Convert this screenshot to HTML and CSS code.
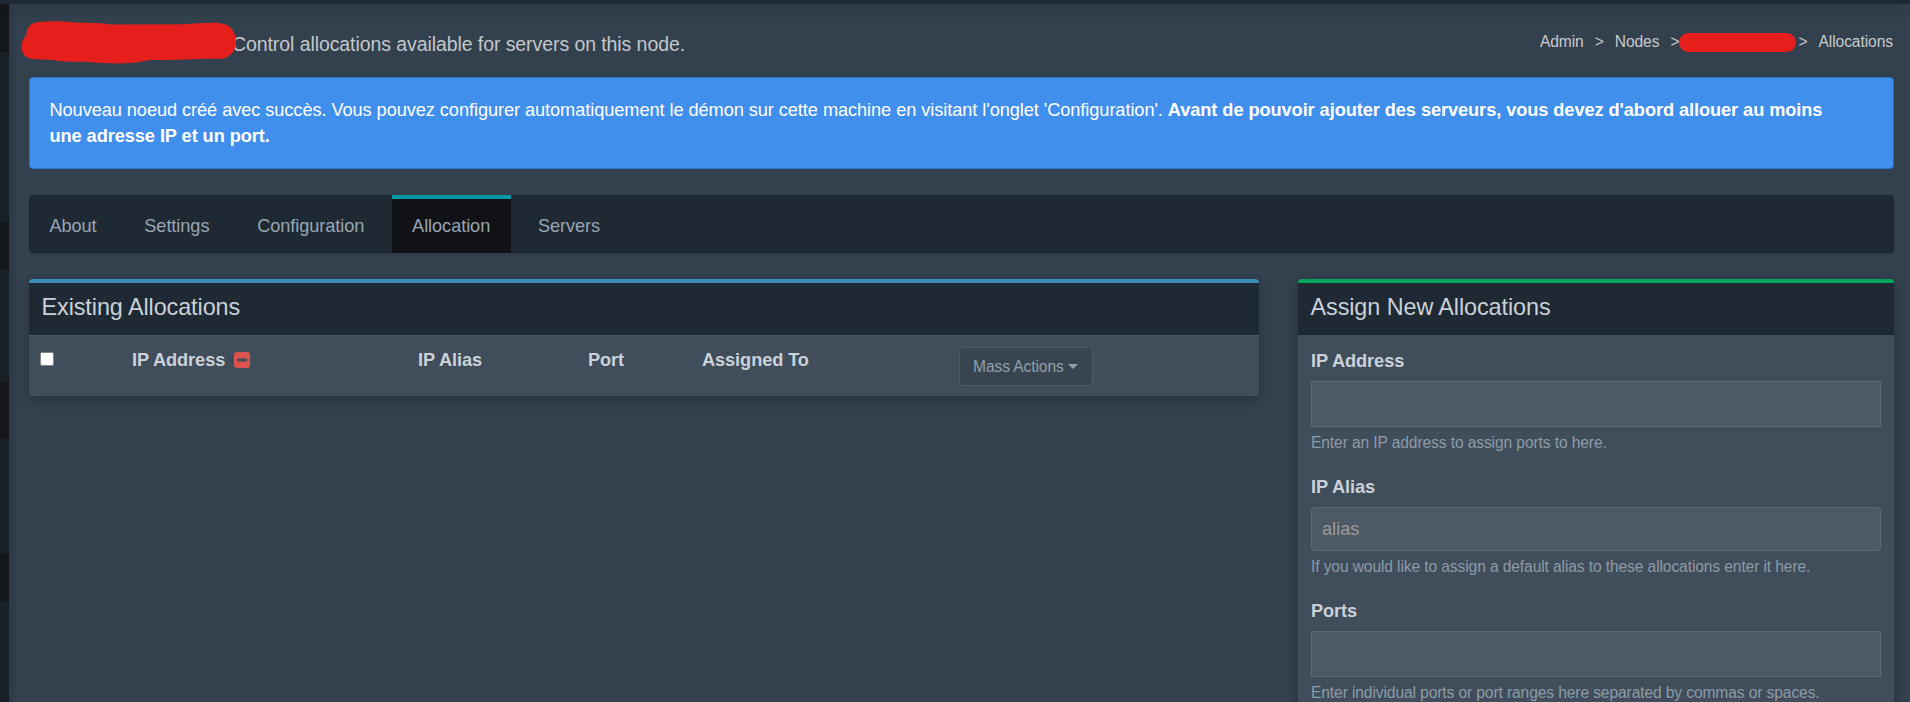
FILE: index.html
```html
<!DOCTYPE html>
<html lang="fr">
<head>
<meta charset="utf-8">
<title>Allocations</title>
<link rel="stylesheet" href="styles.css">
</head>
<body>
<div class="navbar"></div>
<div class="wrapper">
  <aside class="sidebar">
    <div class="side-dark side-first"></div>
    <div class="side-dark side-second"></div>
    <div class="side-dark side-active"></div>
    <div class="side-dark side-last"></div>
  </aside>
  <main class="content">
    <header class="page-header">
      <div class="title">
        <svg class="title-mask" width="216" height="44" viewBox="0 0 216 44"><path d="M18 1C9 2 5 7 5.500 14.500C2 17 .5 21 .5 26C.5 33 5 37 11 38L32 39C43 41 53 41 64 40.700C80 42 97 43 110 42C120 41 124 39.500 132 38.800C151 39.500 166 38.500 181 37.800L201 37.800C210 36 215 29 215 21C215 10 209 3 198 2C184 1.400 174 2.500 164 3.200L90 3.500C77 1.600 66 2 54 1.600C42 .2 29 -.2 18 1Z"/></svg>
        <h1>Control allocations available for servers on this node.</h1>
      </div>
      <nav class="breadcrumb">
        <a class="crumb-admin">Admin</a><span class="sep">&gt;</span><a>Nodes</a><span class="sep sep-mask">&gt;</span><i class="crumb-mask"></i><span class="sep sep-end">&gt;</span><span>Allocations</span>
      </nav>
    </header>
    <div class="alert">Nouveau noeud créé avec succès. Vous pouvez configurer automatiquement le démon sur cette machine en visitant l'onglet 'Configuration'. <strong>Avant de pouvoir ajouter des serveurs, vous devez d'abord allouer au moins<br>une adresse IP et un port.</strong></div>
    <nav class="tabs">
      <a class="tab">About</a>
      <a class="tab">Settings</a>
      <a class="tab">Configuration</a>
      <a class="tab active">Allocation</a>
      <a class="tab">Servers</a>
    </nav>
    <div class="row">
      <section class="box box-primary">
        <h3 class="box-title">Existing Allocations</h3>
        <div class="table-head">
          <div><span class="checkbox"></span></div>
          <div class="ip-head">IP Address
            <svg class="minus" width="16" height="16" viewBox="0 0 16 16"><path fill-rule="evenodd" d="M3 0H13Q16 0 16 3V13Q16 16 13 16H3Q0 16 0 13V3Q0 0 3 0ZM3.800 6.600Q3 6.600 3 7.400V8.600Q3 9.400 3.800 9.400H12.200Q13 9.400 13 8.600V7.400Q13 6.600 12.200 6.600Z"/></svg>
          </div>
          <div>IP Alias</div>
          <div>Port</div>
          <div>Assigned To</div>
          <div><button class="mass">Mass Actions <span class="caret"></span></button></div>
        </div>
      </section>
      <section class="box box-success">
        <h3 class="box-title">Assign New Allocations</h3>
        <div class="form">
          <label>IP Address</label>
          <div class="field select"></div>
          <p>Enter an IP address to assign ports to here.</p>
          <label>IP Alias</label>
          <input class="field" type="text" placeholder="alias">
          <p>If you would like to assign a default alias to these allocations enter it here.</p>
          <label>Ports</label>
          <div class="field select"></div>
          <p>Enter individual ports or port ranges here separated by commas or spaces.</p>
        </div>
      </section>
    </div>
  </main>
</div>
</body>
</html>
```
FILE: styles.css
```css
* { box-sizing: border-box; }
html, body { height: 100%; }
body {
  margin: 0;
  overflow: hidden;
  background: #33404d;
  color: #cad1d8;
  font: 18.2px/26px "Liberation Sans", Arial, sans-serif;
  letter-spacing: -.08px;
}
.navbar {
  position: relative;
  z-index: 1;
  height: 4px;
  background: #1f2933;
  box-shadow: 0 4px 13px rgba(0, 0, 0, .2);
}
.wrapper { display: flex; height: 698px; }
.sidebar {
  flex: none;
  width: 9px;
  background: #1a2027;
  box-shadow: 0 0 8px rgba(0, 0, 0, .25);
}
.side-dark { height: 47px; background: #13171e; }
.side-first { height: 48px; background: #13171b; }
.side-second { margin-top: 170px; }
.side-active { height: 57px; margin-top: 113px; background: #16161b; }
.side-last { height: 48px; margin-top: 114px; }
.content { flex: 1; min-width: 0; padding: 0 16px 0 20px; }

.page-header { display: flex; justify-content: space-between; height: 73px; }
.title { position: relative; padding: 27px 0 0 203px; }
.title h1 {
  margin: 0;
  color: #c3c7cb;
  font-size: 19.5px;
  font-weight: 400;
  line-height: 26px;
  white-space: nowrap;
}
.title-mask { position: absolute; left: -8px; top: 17px; fill: #e61e1c; }
.breadcrumb {
  display: flex;
  align-items: center;
  height: 22px;
  margin-top: 27px;
  color: #c7cbce;
  font-size: 15.6px;
  line-height: 22px;
  white-space: nowrap;
}
.sep { padding: 0 11px; }
.sep-mask { padding-right: 0; }
.sep-end { padding-left: 2px; }
.crumb-mask { width: 117px; height: 19px; border-radius: 10px; background: #e61e1c; }
.breadcrumb > :last-child { padding-right: 1px; }

.alert {
  height: 92px;
  padding: 19px 19.5px;
  border: 1px solid #2a72c6;
  border-radius: 4px;
  background: #408fec;
  color: #fff;
  letter-spacing: -.068px;
  white-space: nowrap;
}
.tabs {
  display: flex;
  gap: 7px;
  height: 58px;
  margin-top: 26px;
  border-radius: 4px;
  background: #1f2933;
  box-shadow: 0 1px 2px rgba(0, 0, 0, .15);
}
.tab {
  padding: 14px 20.4px 0;
  border-top: 4px solid transparent;
  color: #98a5b2;
}
.tab.active { border-top-color: #099aa6; background: #101216; }

.row { display: flex; align-items: flex-start; justify-content: space-between; margin-top: 26px; }
.box {
  overflow: hidden;
  border-top: 4px solid #3c8dbc;
  border-radius: 4px;
  background: #404d5a;
  box-shadow: 0 4px 12px rgba(0, 0, 0, .22);
}
.box-primary { width: 1230px; }
.box-success { width: 596px; border-top-color: #00a65a; }
.box-title {
  height: 52px;
  margin: 0;
  padding: 11px 12.5px;
  background: #1f2933;
  font-size: 23.4px;
  font-weight: 400;
  line-height: 26px;
}
.table-head {
  display: grid;
  grid-template-columns: 92px 286px 170px 114px 257px 1fr;
  height: 61px;
  padding: 11px 0 0 11px;
  border-top: 1px solid #4d5b69;
  font-weight: 700;
}
.checkbox { display: block; width: 14px; height: 14px; margin-top: 5px; border: 1px solid #858585; border-radius: 2px; background: #fff; }
.ip-head { display: flex; gap: 9px; }
.minus { margin-top: 5px; fill: #d9534f; }
.mass {
  display: flex;
  align-items: center;
  gap: 4px;
  height: 39px;
  width: 134px;
  padding: 0 13px;
  border: 1px solid #4d5b69;
  border-radius: 4px;
  background: #384551;
  color: #929eaa;
  font: 15.6px/23px "Liberation Sans", Arial, sans-serif;
  letter-spacing: -.1px;
  white-space: nowrap;
}
.caret { border: 5px solid transparent; border-top-color: currentColor; border-bottom: 0; }
.form { padding: 13px 13px 0; }
.form label { display: block; height: 33px; font-weight: 700; }
.field {
  display: block;
  width: 100%;
  height: 44px;
  padding: 0 10px;
  border: 1px solid #5b6875;
  border-radius: 4px;
  background: #4d5a66;
  color: #cad1d8;
  font: inherit;
}
.select { height: 46px; border-radius: 0; }
.field::placeholder { color: #999; opacity: 1; }
.form p {
  height: 47px;
  margin: 0;
  padding-top: 5px;
  color: #8d9ba8;
  font-size: 15.6px;
  letter-spacing: -.11px;
  line-height: 22px;
  white-space: nowrap;
}
```
